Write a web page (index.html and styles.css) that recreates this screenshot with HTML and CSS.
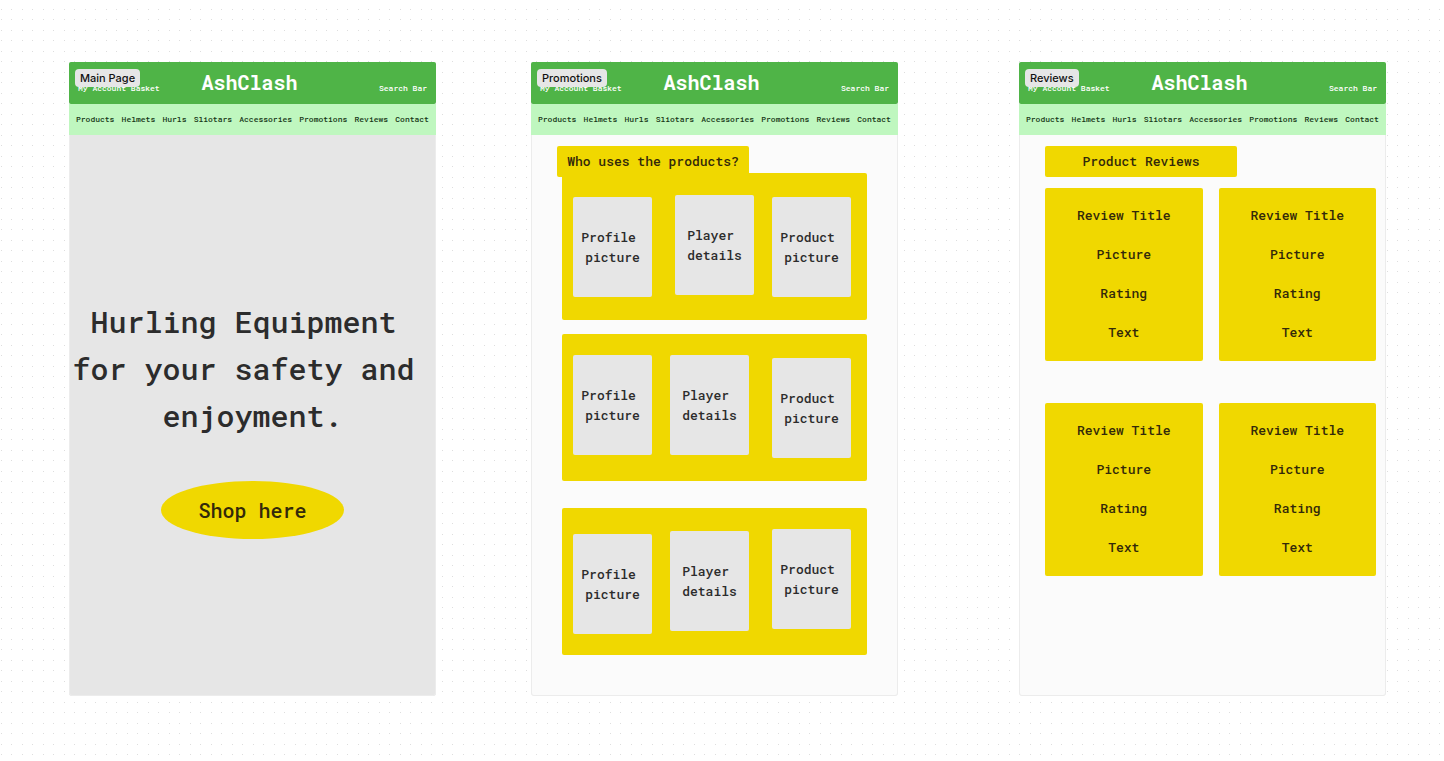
FILE: index.html
```
<!DOCTYPE html>
<html lang="en">
<head>
<meta charset="utf-8">
<meta name="viewport" content="width=device-width, initial-scale=1">
<title>AshClash wireframes</title>
<link rel="stylesheet" href="styles.css">
</head>
<body>
<main class="board">
  <section class="frame frame-main">
    <span class="frame-label">Main Page</span>
    <header class="site-header">
      <div class="account"><a href="#">My Account</a> <a href="#">Basket</a></div>
      <div class="logo">AshClash</div>
      <a class="search" href="#">Search Bar</a>
    </header>
    <nav class="site-nav">
      <a href="#">Products</a><a href="#">Helmets</a><a href="#">Hurls</a><a href="#">Sliotars</a><a href="#">Accessories</a><a href="#">Promotions</a><a href="#">Reviews</a><a href="#">Contact</a>
    </nav>
    <div class="hero">
      <h1 class="hero-title">Hurling Equipment&nbsp;<br>for your safety and&nbsp;<br>enjoyment.</h1>
      <button class="shop" type="button">Shop here</button>
    </div>
  </section>

  <section class="frame frame-promotions">
    <span class="frame-label">Promotions</span>
    <header class="site-header">
      <div class="account"><a href="#">My Account</a> <a href="#">Basket</a></div>
      <div class="logo">AshClash</div>
      <a class="search" href="#">Search Bar</a>
    </header>
    <nav class="site-nav">
      <a href="#">Products</a><a href="#">Helmets</a><a href="#">Hurls</a><a href="#">Sliotars</a><a href="#">Accessories</a><a href="#">Promotions</a><a href="#">Reviews</a><a href="#">Contact</a>
    </nav>
    <div class="promotions">
      <h2 class="banner">Who uses the products?</h2>
      <div class="players">
        <div class="player player-first">
          <div class="tile">Profile&nbsp;<br>picture</div>
          <div class="tile">Player&nbsp;<br>details</div>
          <div class="tile">Product&nbsp;<br>picture</div>
        </div>
        <div class="player player-second">
          <div class="tile">Profile&nbsp;<br>picture</div>
          <div class="tile">Player&nbsp;<br>details</div>
          <div class="tile">Product&nbsp;<br>picture</div>
        </div>
        <div class="player player-third">
          <div class="tile">Profile&nbsp;<br>picture</div>
          <div class="tile">Player&nbsp;<br>details</div>
          <div class="tile">Product&nbsp;<br>picture</div>
        </div>
      </div>
    </div>
  </section>

  <section class="frame frame-reviews">
    <span class="frame-label">Reviews</span>
    <header class="site-header">
      <div class="account"><a href="#">My Account</a> <a href="#">Basket</a></div>
      <div class="logo">AshClash</div>
      <a class="search" href="#">Search Bar</a>
    </header>
    <nav class="site-nav">
      <a href="#">Products</a><a href="#">Helmets</a><a href="#">Hurls</a><a href="#">Sliotars</a><a href="#">Accessories</a><a href="#">Promotions</a><a href="#">Reviews</a><a href="#">Contact</a>
    </nav>
    <div class="reviews">
      <h2 class="banner">Product Reviews</h2>
      <div class="review-grid">
        <article class="review"><h3>Review Title</h3><p>Picture</p><p>Rating</p><p>Text</p></article>
        <article class="review"><h3>Review Title</h3><p>Picture</p><p>Rating</p><p>Text</p></article>
        <article class="review"><h3>Review Title</h3><p>Picture</p><p>Rating</p><p>Text</p></article>
        <article class="review"><h3>Review Title</h3><p>Picture</p><p>Rating</p><p>Text</p></article>
      </div>
    </div>
  </section>
</main>
</body>
</html>
```

FILE: styles.css
```
* {
  box-sizing: border-box;
}

body {
  margin: 0;
  min-height: 100vh;
  /* two dots per tile in each direction */
  background: #fff url("data:image/svg+xml,%3Csvg xmlns='http://www.w3.org/2000/svg' width='21' height='21'%3E%3Cpath fill='%23dedede' d='M1 9h1v1h-1zM11 9h1v1h-1zM1 19h1v1h-1zM11 19h1v1h-1z'/%3E%3C/svg%3E");
  color: #2c2c2c;
  font-family: "Roboto Mono", "DejaVu Sans Mono", monospace;
  font-size: 13px;
  font-weight: 500;
  line-height: 20px;
}

h1, h2, h3, p {
  margin: 0;
  font-size: inherit;
  font-weight: inherit;
}

a {
  color: inherit;
  text-decoration: none;
}

.board {
  display: flex;
  min-height: 100vh;
  padding: 62px 58px 65px 69px;
}

.frame {
  position: relative;
  display: flex;
  flex: 1 1 0;
  flex-direction: column;
  min-width: 0;
  border-radius: 3px;
  background: #fbfbfb;
  box-shadow: inset 0 0 0 1px #ececec;
}

.frame-main {
  background: #e6e6e6;
}

.frame-promotions {
  margin-left: 95px;
}

.frame-reviews {
  margin-left: 121px;
}

.frame-label {
  position: absolute;
  top: 7px;
  left: 6px;
  padding: 0 5px;
  border-radius: 4px;
  background: #e6e6e6;
  color: #111;
  font: 500 11px/18px Inter, sans-serif;
}

.site-header {
  display: grid;
  grid-template-columns: 1fr auto 1fr;
  align-items: end;
  height: 42px;
  padding: 0 9px 6px;
  border-radius: 2px;
  background: #4fb447;
  color: #fff;
  font-size: 8px;
  white-space: nowrap;
}

.account {
  width: 0;
}

.logo {
  padding: 0 6px 2px 0;
  font-size: 20px;
  font-weight: 700;
  line-height: 28px;
}

.search {
  text-align: right;
}

.site-nav {
  display: flex;
  align-items: center;
  justify-content: space-between;
  height: 31px;
  padding: 0 7px 2px;
  background: #bff7bf;
  color: #173817;
  font-size: 8px;
}

.hero {
  display: flex;
  flex-direction: column;
  align-items: center;
  gap: 42px;
  padding-top: 163px;
}

.hero-title {
  font-size: 30px;
  line-height: 47px;
  text-align: center;
  white-space: nowrap;
}

.shop {
  width: 50%;
  height: 58px;
  padding: 0;
  border: 0;
  border-radius: 50%;
  background: #f0d800;
  color: #33290a;
  font: 500 20px/28px "Roboto Mono", "DejaVu Sans Mono", monospace;
}

.promotions,
.reviews {
  padding: 11px 10px 0 26px;
}

.banner {
  width: 58%;
  padding: 5px 0 6px;
  border-radius: 2px;
  background: #f0d800;
  color: #33290a;
  text-align: center;
  white-space: nowrap;
}

.players {
  margin: -4px 21px 0 5px;
}

.player {
  display: grid;
  grid-template-columns: 97fr 102fr 95fr;
  height: 147px;
  padding-left: 11px;
  border-radius: 2px;
  background: #f0d800;
}

.player-first {
  grid-template-columns: 102fr 97fr 95fr;
}

.player-second {
  margin-top: 14px;
}

.player-third {
  margin-top: 27px;
}

.tile {
  width: 79px;
  height: 100px;
  margin-top: 24px;
  padding: 30px 0;
  border-radius: 2px;
  background: #e6e6e6;
  text-align: center;
  white-space: nowrap;
}

.player-first .tile:nth-child(2) {
  margin-top: 22px;
}

.player-second .tile:nth-child(-n + 2) {
  margin-top: 21px;
}

.player-third .tile:first-child {
  margin-top: 26px;
}

.player-third .tile:nth-child(2) {
  margin-top: 23px;
}

.player-third .tile:last-child {
  margin-top: 21px;
}

.review-grid {
  display: grid;
  grid-template-columns: 1fr 1fr;
  gap: 42px 16px;
  margin-top: 11px;
}

.review {
  padding: 8px 0 9px;
  border-radius: 2px;
  background: #f0d800;
  color: #33290a;
  line-height: 39px;
  text-align: center;
}
```
